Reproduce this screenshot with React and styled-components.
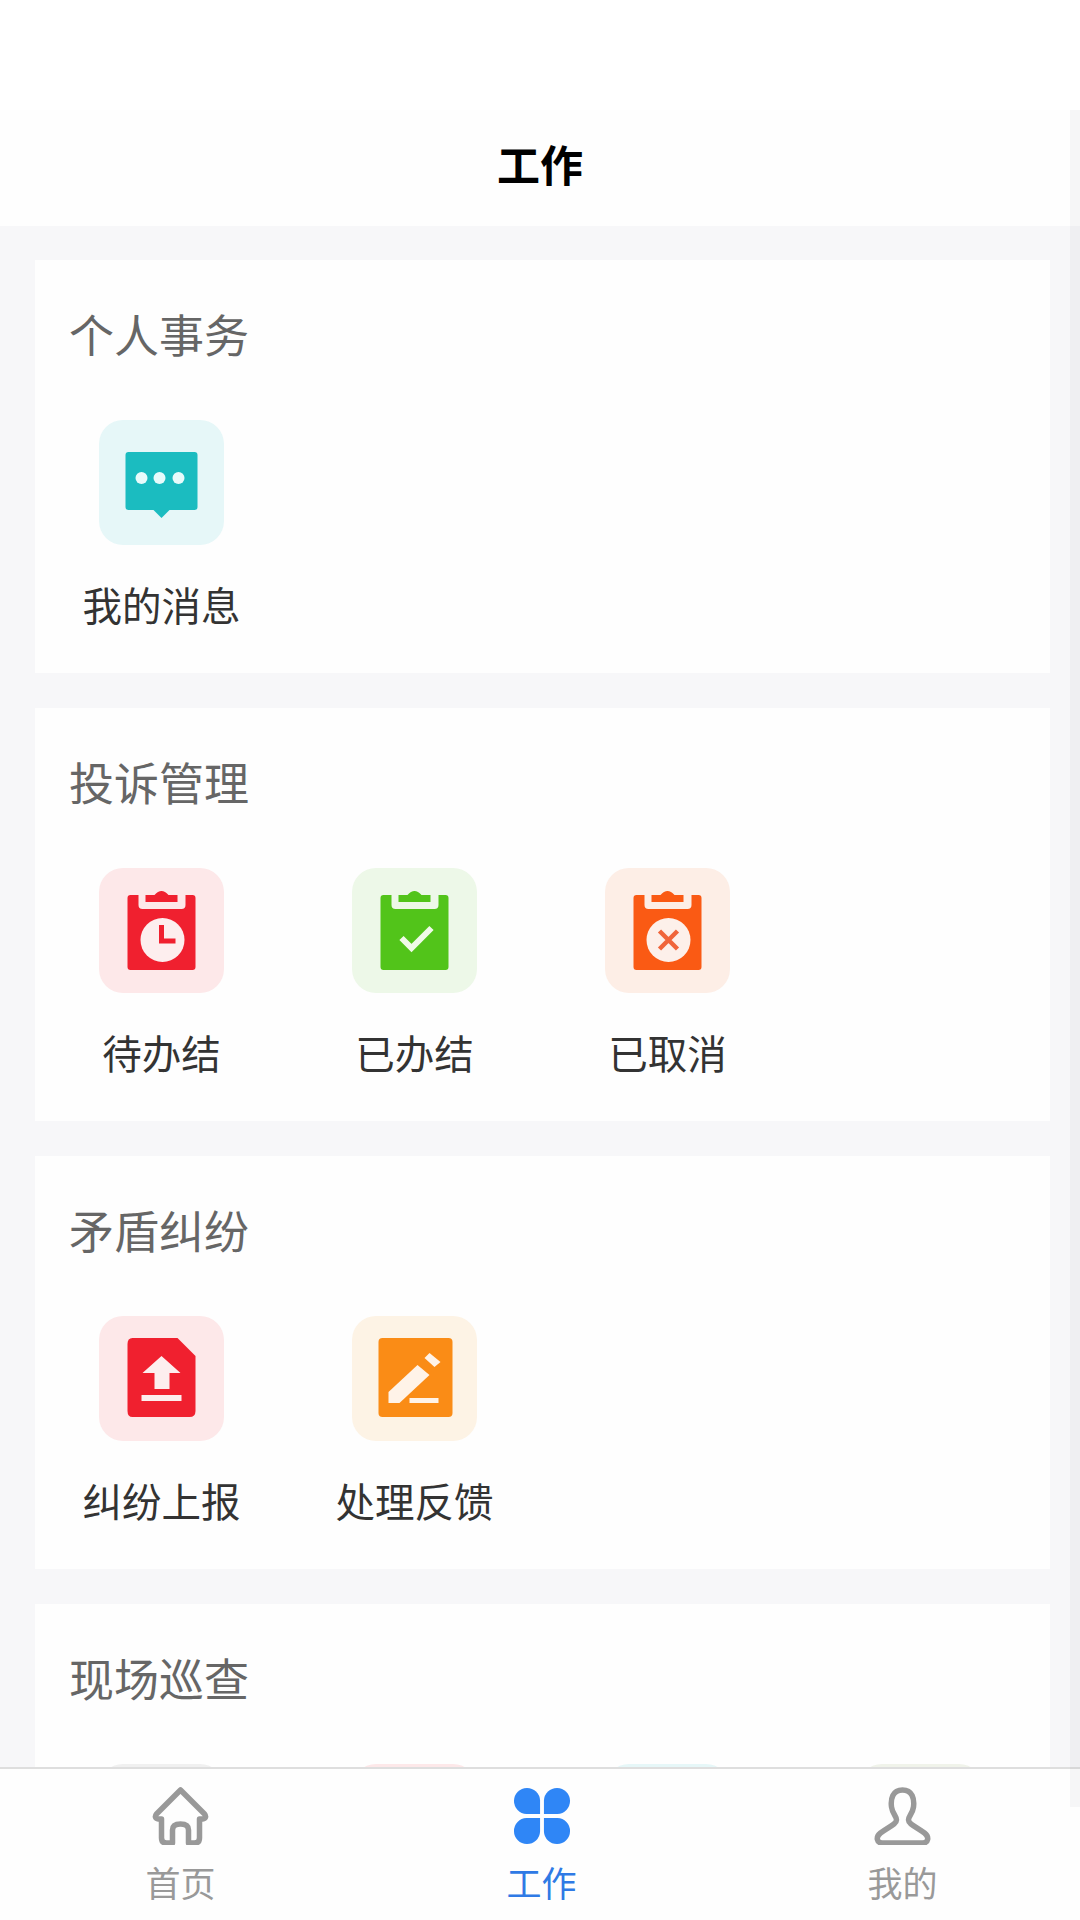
import React from 'react';
import styled, { createGlobalStyle } from 'styled-components';

const GlobalStyle = createGlobalStyle`
  html, body {
    margin: 0;
    padding: 0;
    background: #f6f6f8;
    font-family: "Noto Sans CJK SC", "Noto Sans", sans-serif;
  }
`;

const Page = styled.div`
  position: relative;
  width: 1080px;
  height: 1920px;
  overflow: hidden;
  background: #f7f7f9;
`;

const StatusBar = styled.div`
  height: 110px;
  background: #fff;
`;

const NavBar = styled.header`
  height: 116px;
  display: flex;
  align-items: center;
  justify-content: center;
  background: #fefefe;
`;

const NavTitle = styled.h1`
  margin: 0;
  font-size: 43px;
  font-weight: 700;
  color: #000;
  position: relative;
  top: -5px;
`;

const Content = styled.main`
  display: flex;
  flex-direction: column;
  gap: 35px;
  padding: 34px 30px 0 35px;
`;

const Card = styled.section`
  background: #fefefe;
  padding: 44px 0 44px;
`;

const CardTitle = styled.h2`
  margin: 0 0 56px 34px;
  font-size: 45px;
  line-height: 60px;
  font-weight: 400;
  color: #666;
`;

const Grid = styled.div`
  display: grid;
  grid-template-columns: repeat(4, 1fr);
  padding-right: 3px;
`;

const Item = styled.div`
  display: flex;
  flex-direction: column;
  align-items: center;
`;

const Tile = styled.div`
  width: 125px;
  height: 125px;
  border-radius: 24px;
  background: ${(p) => p.$bg};
  svg {
    display: block;
  }
`;

const Label = styled.span`
  margin-top: 34px;
  font-size: 39.5px;
  line-height: 50px;
  color: #333;
`;

const TabBar = styled.nav`
  position: absolute;
  left: 0;
  right: 0;
  bottom: 0;
  height: 153px;
  box-sizing: border-box;
  display: grid;
  grid-template-columns: repeat(3, 361px);
  background: #fefefe;
  border-top: 2px solid #dedede;
`;

const Tab = styled.div`
  display: flex;
  flex-direction: column;
  align-items: center;
  padding-top: 18px;
  color: ${(p) => (p.$active ? '#2f7ae5' : '#999')};
`;

const TabIconBox = styled.div`
  height: 58px;
  svg {
    display: block;
  }
`;

const TabLabel = styled.span`
  margin-top: 15px;
  font-size: 35px;
  line-height: 44px;
`;

const ScrollTrack = styled.div`
  position: absolute;
  top: 110px;
  right: 0;
  width: 10px;
  height: 1697px;
  background: rgba(40, 40, 70, 0.035);
`;

const TileSvg = ({ children }) => (
  <svg width="125" height="125" viewBox="0 0 124 125">
    {children}
  </svg>
);

const MessageIcon = () => (
  <TileSvg>
    <path d="M29 32H95Q98 32 98 35V87Q98 90 95 90H70L62 98L54 90H29Q26 90 26 87V35Q26 32 29 32Z" fill="#1bbcc0" />
    <circle cx="42" cy="58" r="6" fill="#e8fbfb" />
    <circle cx="60" cy="58" r="6" fill="#e8fbfb" />
    <circle cx="79" cy="58" r="6" fill="#e8fbfb" />
  </TileSvg>
);

const Clipboard = ({ color, bg, children }) => (
  <TileSvg>
    <path
      d="M31 27H39V37Q39 41 43 41H82Q86 41 86 37V27H93Q96 27 96 30V99Q96 102 93 102H31Q28 102 28 99V30Q28 27 31 27Z"
      fill={color}
    />
    <path d="M46 27H55Q62 19 69 27H78V34H46Z" fill={color} />
    {bg && <circle cx="63" cy="72" r="22" fill={bg} />}
    {children}
  </TileSvg>
);

const ClockIcon = () => (
  <Clipboard color="#f0202f" bg="#fdeeee">
    <path d="M62 57V73H76" fill="none" stroke="#f0202f" strokeWidth="5" />
  </Clipboard>
);

const CheckIcon = () => (
  <Clipboard color="#52c41a">
    <path d="M49 70L59 80L79 60" fill="none" stroke="#f0fae8" strokeWidth="6" />
  </Clipboard>
);

const CrossIcon = () => (
  <Clipboard color="#fa5a14" bg="#fdf0ea">
    <path d="M54 63L72 81M72 63L54 81" fill="none" stroke="#f0653a" strokeWidth="4.5" />
  </Clipboard>
);

const UploadIcon = () => (
  <TileSvg>
    <path d="M33 22H78L96 40V95Q96 101 90 101H33Q28 101 28 95V28Q28 22 33 22Z" fill="#f0202f" />
    <path d="M62 40L81 57H70V73H55V57H43Z" fill="#fdeeee" />
    <rect x="42" y="79" width="40" height="6" fill="#fdeeee" />
  </TileSvg>
);

const EditIcon = () => (
  <TileSvg>
    <rect x="26" y="22" width="74" height="79" rx="4" fill="#fa8c16" />
    <path d="M36 76L65 49L77 59L47 87H36Z" fill="#fff3e8" />
    <path d="M72 42L77 37L88 46L82 51Z" fill="#fff3e8" />
    <rect x="57" y="82" width="29" height="5" fill="#fff3e8" />
  </TileSvg>
);

const HomeIcon = () => (
  <svg width="57" height="58" viewBox="0 0 56 58" fill="none" stroke="currentColor" strokeWidth="5.5" strokeLinejoin="round">
    <path d="M28 3L52 27Q55 31 50 32H47V51Q47 56 42 56H36V43Q36 37 28 37Q20 37 20 43V56H14Q9 56 9 51V32H6Q1 31 4 27Z" />
  </svg>
);

const WorkIcon = () => (
  <svg width="58" height="58" viewBox="0 0 60 60" fill="#2f86f6">
    {[0, 90, 180, 270].map((deg) => (
      <path key={deg} d="M28 28H14A13.5 13.5 0 1 1 28 14Z" transform={`rotate(${deg} 30 30)`} />
    ))}
  </svg>
);

const UserIcon = () => (
  <svg width="57" height="58" viewBox="0 0 56 58" fill="none" stroke="currentColor" strokeWidth="5.5" strokeLinejoin="round">
    <path d="M28 3C18 3 16 12 17 20C18 27 22 29 22 33C22 37 14 40 6 46C1 50 2 56 8 56H48C54 56 55 50 50 46C42 40 34 37 34 33C34 29 38 27 39 20C40 12 38 3 28 3Z" />
  </svg>
);

const sections = [
  {
    title: '个人事务',
    items: [{ label: '我的消息', bg: '#e6f7f8', Icon: MessageIcon }],
  },
  {
    title: '投诉管理',
    items: [
      { label: '待办结', bg: '#fde8e9', Icon: ClockIcon },
      { label: '已办结', bg: '#edf8e8', Icon: CheckIcon },
      { label: '已取消', bg: '#fdeee6', Icon: CrossIcon },
    ],
  },
  {
    title: '矛盾纠纷',
    items: [
      { label: '纠纷上报', bg: '#fde8e9', Icon: UploadIcon },
      { label: '处理反馈', bg: '#fdf3e5', Icon: EditIcon },
    ],
  },
  {
    title: '现场巡查',
    items: [{ bg: '#f0f0f0' }, { bg: '#fde8e9' }, { bg: '#e6f7f8' }, { bg: '#f0f3ea' }],
  },
];

const tabs = [
  { label: '首页', Icon: HomeIcon },
  { label: '工作', Icon: WorkIcon, active: true },
  { label: '我的', Icon: UserIcon },
];

const App = () => {
  return (
    <Page>
      <GlobalStyle />
      <StatusBar />
      <NavBar>
        <NavTitle>工作</NavTitle>
      </NavBar>
      <Content>
        {sections.map((section) => (
          <Card key={section.title}>
            <CardTitle>{section.title}</CardTitle>
            <Grid>
              {section.items.map(({ label, bg, Icon }, i) => (
                <Item key={i}>
                  <Tile $bg={bg}>{Icon && <Icon />}</Tile>
                  {label && <Label>{label}</Label>}
                </Item>
              ))}
            </Grid>
          </Card>
        ))}
      </Content>
      <TabBar>
        {tabs.map(({ label, Icon, active }) => (
          <Tab key={label} $active={active}>
            <TabIconBox>
              <Icon />
            </TabIconBox>
            <TabLabel>{label}</TabLabel>
          </Tab>
        ))}
      </TabBar>
      <ScrollTrack />
    </Page>
  );
};

export default App;
